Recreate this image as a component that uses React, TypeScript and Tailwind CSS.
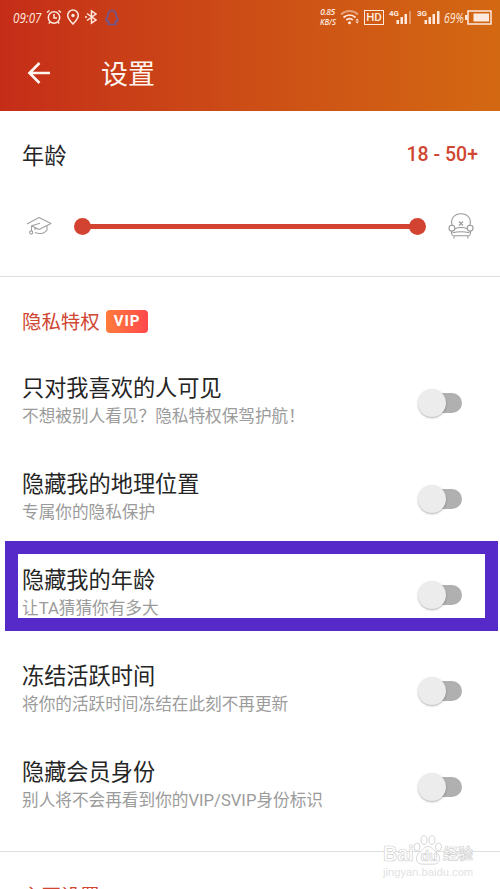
import React, { useState } from 'react';

interface PrivacyOption {
  id: string;
  title: string;
  description: string;
  highlighted?: boolean;
}

const privacyOptions: PrivacyOption[] = [
  { id: 'liked-only', title: '只对我喜欢的人可见', description: '不想被别人看见？隐私特权保驾护航！' },
  { id: 'location', title: '隐藏我的地理位置', description: '专属你的隐私保护' },
  { id: 'age', title: '隐藏我的年龄', description: '让TA猜猜你有多大', highlighted: true },
  { id: 'active-time', title: '冻结活跃时间', description: '将你的活跃时间冻结在此刻不再更新' },
  { id: 'membership', title: '隐藏会员身份', description: '别人将不会再看到你的VIP/SVIP身份标识' },
];

const StatusBar: React.FC = () => (
  <div className="flex h-[34px] items-center justify-between pl-[13px] pr-2 text-[#ffe9df]">
    <div className="flex items-center">
      <span className="w-[29px] origin-left scale-x-[.83] whitespace-nowrap font-['Open_Sans'] text-[14px] italic">09:07</span>
      <svg className="ml-[4px]" width="16" height="16" viewBox="0 0 16 16" fill="none" stroke="currentColor" strokeWidth="1.5">
        <circle cx="8" cy="8.5" r="5.7" />
        <path d="M1 3.5 3.5 1.5M15 3.5l-2.5-2M8 5v4h3M4 13l-1.2 1.5M12 13l1.2 1.5" />
      </svg>
      <svg className="ml-[4px]" width="14" height="16" viewBox="0 0 14 16" fill="none" stroke="currentColor" strokeWidth="1.5">
        <path d="M7 15C4 11.8 1.7 9.3 1.7 6.4a5.3 5.3 0 0 1 10.6 0C12.3 9.3 10 11.8 7 15Z" />
        <circle cx="7" cy="6.5" r="1.7" fill="currentColor" stroke="none" />
      </svg>
      <svg className="ml-[5px]" width="13" height="16" viewBox="0 0 13 16" fill="none" stroke="currentColor" strokeWidth="1.5">
        <path d="M2 4.5 11 11 6.5 14V2L11 5 2 11.5M0 8h2" />
      </svg>
      <svg className="ml-[6px]" width="16" height="17" viewBox="0 0 16 17" fill="none" stroke="#70588d" strokeWidth="1.7" strokeLinejoin="round">
        <path d="M4 6.5C4 3.3 5.5 1.5 8 1.5s4 1.8 4 5c1.2 2 2 3.5 2 5.5l-1.7-.5-1.3 2.5 1 1.5H4l1-1.5-1.3-2.5L2 12c0-2 .8-3.5 2-5.5Z" />
      </svg>
    </div>
    <div className="flex items-center">
      <div className="flex w-[17px] flex-col items-center font-['Open_Sans'] text-[8.5px] font-semibold italic leading-[10px]">
        <span className="tracking-[-0.5px]">0.85</span>
        <span className="scale-x-90">KB/S</span>
      </div>
      <svg className="ml-[4px]" width="20" height="16" viewBox="0 0 20 16" fill="none" stroke="currentColor" strokeWidth="1.8">
        <path d="M1 5.5c5-4.7 12-4.7 17 0" opacity=".5" />
        <path d="M3.5 8.5c3.7-3.3 8.5-3.3 12 0M6.3 11c2-1.7 4.6-1.7 6.5 0" />
        <circle cx="9.5" cy="13.7" r="1.5" fill="currentColor" stroke="none" />
        <path d="m15.5 11.5 1.7-2 1.7 2zM15.5 12.5l1.7 2 1.7-2z" fill="currentColor" stroke="none" />
      </svg>
      <span className="ml-[4px] flex h-[15px] w-5 items-center justify-center border-[1.5px] border-current pt-px font-['Roboto'] text-[11.5px] font-medium leading-none">HD</span>
      <svg className="ml-[5px]" width="23" height="16" viewBox="0 0 23 16" fill="currentColor">
        <text x="0" y="7" fontSize="8" fontWeight="700" fontFamily="Roboto, sans-serif">4G</text>
        <path d="M7.5 11h2.5v4H7.5zM11.5 8H14v7h-2.5zM15.5 5H18v10h-2.5z" />
        <path d="M20 2h2v13h-2z" opacity=".4" />
      </svg>
      <svg className="ml-[5px]" width="23" height="16" viewBox="0 0 23 16" fill="currentColor">
        <text x="0" y="7" fontSize="8" fontWeight="700" fontFamily="Roboto, sans-serif">3G</text>
        <path d="M7.5 11h2.5v4H7.5zM11.5 8H14v7h-2.5zM15.5 5H18v10h-2.5zM20 2h2.5v13H20z" />
      </svg>
      <span className="ml-[4px] w-[21px] origin-left scale-x-[.74] whitespace-nowrap font-['Open_Sans'] text-[14px] italic">69%</span>
      <svg width="27" height="15" viewBox="0 0 27 15" fill="none" stroke="currentColor" strokeWidth="1.5">
        <path d="M3 1h23v13H3z" />
        <path d="M8.5 3.5H24v8H8.5zM0 5h2.5v5H0z" fill="currentColor" stroke="none" />
      </svg>
    </div>
  </div>
);

const Header: React.FC = () => (
  <header className="h-[111px] bg-gradient-to-r from-[#c52c18] to-[#d36812]">
    <StatusBar />
    <div className="flex h-[77px] items-center">
      <button aria-label="返回" className="ml-[27px]">
        <svg width="24" height="24" viewBox="0 0 24 24" fill="none" stroke="#fff5ef" strokeWidth="2.7">
          <path d="M23 12H3M12.5 2 2.5 12l10 10" />
        </svg>
      </button>
      <h1 className="ml-[50px] pt-[5px] text-[27px] leading-none text-[#fff5ef]">设置</h1>
    </div>
  </header>
);

const GraduationCap: React.FC = () => (
  <svg className="shrink-0" width="26" height="20" viewBox="0 0 26 20" fill="none" stroke="#a0a0a0" strokeWidth="1.1" strokeLinejoin="round">
    <path d="M1 8 13 1.5 25 7.5 13 13.5 5.5 9.7 14 7.3M5.5 9.7V15M21 10v4c-2.5 4-8 4.3-12 2.5M9 11.5v2.5" />
    <circle cx="5.2" cy="16.5" r="1.6" />
  </svg>
);

const Armchair: React.FC = () => (
  <svg className="shrink-0" width="26" height="28" viewBox="0 0 26 28" fill="none" stroke="#999" strokeWidth="1.1">
    <path d="M4.2 13.5C2 6.5 6.5 1.7 13 1.7s11 4.8 8.8 11.8" />
    <circle cx="3.9" cy="16.2" r="2.9" />
    <circle cx="22.1" cy="16.2" r="2.9" />
    <path d="M6.8 16.7c4-1.5 8.4-1.5 12.4 0M3.5 19.2c-.2 3 .4 4.6 2.5 4.6h14c2.1 0 2.7-1.6 2.5-4.6M4.5 20.7c5-1.2 12-1.2 17 0M6 24v2.5M20 24v2.5" />
    <path d="m11 9.5 4 4M15 9.5l-4 4" />
  </svg>
);

const AgeRange: React.FC = () => (
  <section className="h-[166px] border-b border-[#dfdfdf]">
    <div className="flex h-[59px] items-end justify-between px-[22px]">
      <h2 className="-mb-0.5 text-[22.2px] leading-8 text-[#252525]">年龄</h2>
      <span className="mb-px font-['Roboto'] text-[19.5px] font-medium leading-7 text-[#cf4632]">18 - 50+</span>
    </div>
    <div className="mt-[42px] flex h-[28px] items-center px-[26px]">
      <GraduationCap />
      <div className="ml-[22px] flex flex-1 items-center">
        <span className="size-[17px] rounded-full bg-[#d34331]" />
        <span className="-mx-1 h-[5px] flex-1 bg-[#d34331]" />
        <span className="size-[17px] rounded-full bg-[#d34331]" />
      </div>
      <div className="ml-[22px]">
        <Armchair />
      </div>
    </div>
  </section>
);

const Toggle: React.FC<{ label: string }> = ({ label }) => {
  const [on, setOn] = useState(false);

  return (
    <button
      role="switch"
      aria-checked={on}
      aria-label={label}
      onClick={() => setOn(!on)}
      className={`flex h-[20px] w-[40px] items-center rounded-full bg-[#b0b0b0] ${on ? 'justify-end' : ''}`}
    >
      <span className="-ml-[4.5px] size-[28px] shrink-0 rounded-full bg-[#ececec] shadow-[0_1px_2px_rgba(0,0,0,.3)]" />
    </button>
  );
};

const OptionRow: React.FC<{ option: PrivacyOption }> = ({ option }) => (
  <div className="relative flex h-24 items-center justify-between pl-[22px] pr-[38px]">
    {option.highlighted && (
      <div className="pointer-events-none absolute left-[5px] right-[2px] top-[-6px] h-[90px] border-[13px] border-[#552ac8]" />
    )}
    <div className="relative pt-[3px]">
      <h3 className="text-[22.2px] leading-8 text-[#252525]">{option.title}</h3>
      <p className="-mt-px pb-1.5 text-[16.65px] leading-7 text-[#9b9b9b]">{option.description}</p>
    </div>
    <Toggle label={option.title} />
  </div>
);

const PawMark: React.FC = () => (
  <svg className="-ml-px shrink-0" width="30" height="31" viewBox="0 0 30 31" fill="#fff" stroke="#d2d2d2" strokeWidth=".9">
    <ellipse cx="4" cy="12" rx="3" ry="4" />
    <ellipse cx="11" cy="5" rx="3" ry="4.3" />
    <ellipse cx="19" cy="5" rx="3" ry="4.3" />
    <ellipse cx="25.5" cy="12" rx="3" ry="4" />
    <path d="M15 11.5c-4 0-5 3.5-8.5 6-5 4-3.5 11 1.5 11.5 3 .3 11 .3 14 0 5-.5 6.5-7.5 1.500-11.500-3.500-2.500-4.500-6-8.500-6Z" />
    <text x="7.5" y="26" fontSize="14" fontFamily="Liberation Sans" strokeWidth=".7">du</text>
  </svg>
);

const Watermark: React.FC = () => (
  <div className="absolute left-[383px] top-[834px] text-white">
    <div className="flex h-[32px] items-end font-['Liberation_Sans','Noto_Sans_CJK_SC',sans-serif] font-bold leading-none [-webkit-text-stroke:.7px_#d2d2d2]">
      <span className="w-[31px] origin-left scale-x-90 text-[22px] leading-[25px]">Bai</span>
      <PawMark />
      <span className="text-[15px] leading-[25px]">经验</span>
    </div>
    <div className="font-['Liberation_Sans'] text-[11.2px] leading-[12px] text-[#e2e2e2]">jingyan.baidu.com</div>
  </div>
);

export default function App() {
  return (
    <main className="relative h-[889px] w-[500px] overflow-hidden bg-white font-[Roboto,'Noto_Sans_CJK_SC',sans-serif]">
      <Header />
      <AgeRange />
      <section className="h-[575px] border-b border-[#dfdfdf]">
        <div className="flex h-[78px] items-center pl-[22px] pt-2.5">
          <h2 className="pt-1 text-[19.4px] leading-8 text-[#cf4632]">隐私特权</h2>
          <span className="ml-[6px] flex h-[23px] w-[42px] items-center justify-center rounded bg-gradient-to-r from-[#ff7b3a] to-[#ff464c] pl-px font-['Roboto'] text-[15px] font-bold tracking-[1px] text-white">VIP</span>
        </div>
        {privacyOptions.map((option) => (
          <OptionRow key={option.id} option={option} />
        ))}
      </section>
      <h2 className="pl-[22px] pt-[29px] text-[19.4px] leading-8 text-[#cf4632]">主页设置</h2>
      <Watermark />
    </main>
  );
}
